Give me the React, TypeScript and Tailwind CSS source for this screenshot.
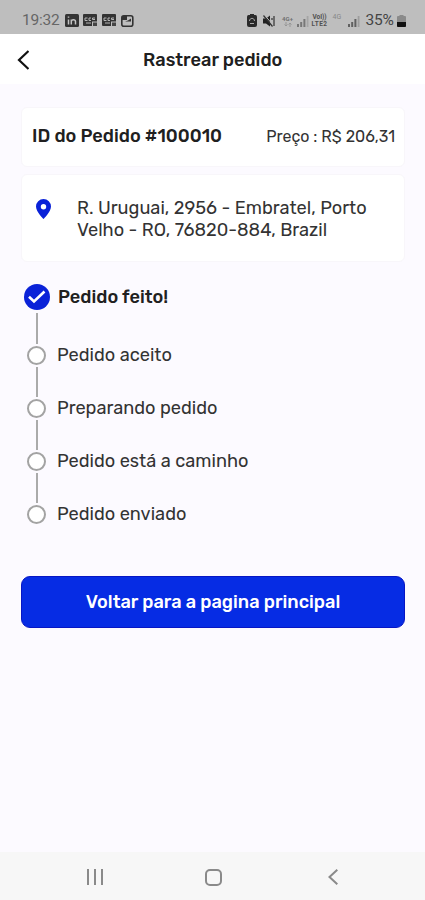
import clsx from "clsx";

type Step = { label: string; done?: boolean };

const steps: Step[] = [
  { label: "Pedido feito!", done: true },
  { label: "Pedido aceito" },
  { label: "Preparando pedido" },
  { label: "Pedido está a caminho" },
  { label: "Pedido enviado" },
];

function Signal({ className }: { className?: string }) {
  return (
    <svg viewBox="0 0 12 12" className={clsx("h-3 w-3 shrink-0", className)} fill="currentColor">
      <path d="M0 9h2v3H0zM3.2 7h2v5h-2zM6.4 4h2v8h-2z" />
      <path d="M9.7 1h1.8v11H9.7z" opacity=".35" />
    </svg>
  );
}

function CardIcon() {
  return (
    <svg viewBox="0 0 15 13" className="h-[13px] w-[15px]">
      <rect width="14" height="12" rx="1" fill="#333" />
      <path d="M4.500 4H2v2.500h2.500M8 4H6v2.500h2M12 4h-2.500v1.500H12M3 9h5" stroke="#b5b5b5" strokeWidth="1" fill="none" />
      <path d="M9 7.500h6V13H9z" fill="#bebebe" />
      <path d="M10 8.500h4V12h-4z" fill="#444" />
    </svg>
  );
}

function StatusBar() {
  return (
    <div className="flex h-[34px] shrink-0 items-center bg-[#bebebe] pt-[7px] pl-[22px] font-[Roboto,sans-serif] text-[#4a4a4a]">
      <span className="w-[43px] text-[15.500px] leading-none tracking-[-0.2px] text-[#666]">19:32</span>
      <svg viewBox="0 0 14 13" className="mr-1 h-[13px] w-[14px]">
        <rect width="14" height="13" rx="1.5" fill="#333" />
        <path d="M3.5 5.5v5M3.5 2.5v1.3M6.3 10.5v-5M6.3 7.5c0-2.4 4.2-2.4 4.2 0v3" stroke="#c4c4c4" strokeWidth="1.5" fill="none" />
      </svg>
      <div className="flex gap-[3.5px]">
        <CardIcon />
        <CardIcon />
      </div>
      <svg viewBox="0 0 13 12" className="ml-1 h-3 w-[13px]">
        <rect x=".8" y=".8" width="11" height="10.4" rx="2" fill="#bebebe" stroke="#333" strokeWidth="1.6" />
        <path d="M1 1h5v4H1zM7 5.500l3-2v3H4z" fill="#333" />
      </svg>

      <svg viewBox="0 0 10 13" className="ml-[113px] h-[13px] w-[10px]">
        <path d="M3 0h4v1h1.500Q10 1 10 3v8q0 2-2 2H2q-2 0-2-2V3q0-2 1.500-2H3z" fill="#2a2a2a" />
        <path d="M2.500 7c0-3.500 5-3.500 5 0M3 9.500h4" stroke="#aaa" fill="none" />
      </svg>
      <svg viewBox="0 0 12 12" className="ml-[6px] h-3 w-3">
        <path d="M0 3.500h3L7 .5v11L3 8.500H0z" fill="#222" />
        <path d="M1.500 0l9 10.500" stroke="#bebebe" strokeWidth="1" />
        <path d="M.5 .5l9 11M9 3v2M11 1v10" stroke="#333" strokeWidth="1.200" />
      </svg>
      <span className="ml-[6px] flex w-[14px] flex-col items-center text-[6px] leading-[7px] font-bold text-[#707070]">
        4G+
        <svg viewBox="0 0 8 5" className="h-[5px] w-2 opacity-50" fill="none" stroke="currentColor">
          <path d="M2 0v4M.5 2.500L2 4l1.500-1.500M6 5V1M4.500 2.500L6 1l1.500 1.500" />
        </svg>
      </span>
      <Signal className="ml-[2px] text-[#777]" />
      <span className="ml-[2px] flex w-[18px] flex-col items-center text-[6.500px] leading-[7px] font-bold text-[#505050]">
        <span>VoI))</span>
        <span className="tracking-[0.4px]">LTE2</span>
      </span>
      <span className="mb-[6px] ml-[4px] w-[11px] text-[7px] leading-none text-[#888]">4G</span>
      <Signal className="ml-[4px] text-[#606060]" />
      <span className="ml-[6px] w-[29px] text-[15.500px] leading-none tracking-[-0.2px] text-[#444]">35%</span>
      <svg viewBox="0 0 9 12" className="ml-[2px] h-3 w-[9px]">
        <path d="M2.500 0h4v1H8q1 0 1 1v9q0 1-1 1H1q-1 0-1-1V2q0-1 1-1h1.500z" fill="#8a8a8a" />
        <path d="M0 7h9v4q0 1-1 1H1q-1 0-1-1z" fill="#111" />
      </svg>
    </div>
  );
}

function StepRow({ step, last }: { step: Step; last: boolean }) {
  return (
    <li className="flex">
      <div className="flex w-[31px] shrink-0 flex-col items-center">
        {step.done ? (
          <svg viewBox="0 0 26 26" className="h-[26px] w-[26px]">
            <circle cx="13" cy="13" r="13" fill="#0a22d8" />
            <path d="M5 12.800l5 4.700 10.500-10" fill="none" stroke="#fff" strokeWidth="2.600" />
          </svg>
        ) : (
          <div className="h-[19px] w-[19px] rounded-full border-2 border-[#a3a3a3] bg-white" />
        )}
        {!last && (
          <div className={clsx("w-[2px] bg-[#aaaaaa]", step.done ? "mt-[3px] mb-[2px] h-[31px]" : "my-[2px] h-[30px]")} />
        )}
      </div>
      <span
        className={clsx(
          "whitespace-nowrap text-[18.200px]",
          step.done ? "ml-[6px] h-[26px] leading-[26px] font-medium text-[#202020]" : "ml-[5px] h-[19px] leading-[18px] text-[#333]"
        )}
      >
        {step.label}
      </span>
    </li>
  );
}

export default function App() {
  return (
    <div className="flex h-[900px] w-[425px] flex-col overflow-hidden bg-[#fcfaff] font-[Rubik,Roboto,sans-serif]">
      <StatusBar />

      <header className="flex h-[50px] shrink-0 items-center bg-white">
        <svg viewBox="0 0 12 20" className="mt-[2px] ml-[17px] h-5 w-3">
          <path d="M11.500 1L2 10l9.500 9" fill="none" stroke="#111" strokeWidth="2.200" />
        </svg>
        <h1 className="mt-[4px] ml-[114px] text-[18.200px] font-medium whitespace-nowrap text-[#202020]">Rastrear pedido</h1>
      </header>

      <main className="flex flex-1 flex-col pt-[23px] pr-[20px] pl-[21px]">
        <section className="flex h-[60px] items-center rounded-md border border-[#f8f6fa] bg-white pr-[9px] pl-[10px]">
          <span className="text-[18.200px] font-medium whitespace-nowrap text-[#202020]">ID do Pedido #100010</span>
          <span className="ml-auto text-[16px] whitespace-nowrap text-[#333]">Preço : R$ 206,31</span>
        </section>

        <section className="mt-[7px] flex h-[88px] rounded-md border border-[#f8f6fa] bg-white pt-[22px] pl-[14px]">
          <svg viewBox="0 0 15 20" className="mt-[2px] h-5 w-[15px]">
            <path fillRule="evenodd" d="M7.500 0a7.500 7.500 0 0 0-7.500 7.500C0 13 7.500 20 7.500 20s7.500-7 7.500-12.500A7.500 7.500 0 0 0 7.500 0zm0 5a2.700 2.700 0 1 1 0 5.400A2.700 2.700 0 0 1 7.500 5z" fill="#0a22d8" />
          </svg>
          <p className="ml-[26px] text-[18.200px] leading-[22px] whitespace-nowrap text-[#333]">
            R. Uruguai, 2956 - Embratel, Porto
            <br />
            Velho - RO, 76820-884, Brazil
          </p>
        </section>

        <ul className="mt-[22px]">
          {steps.map((s, i) => (
            <StepRow key={s.label} step={s} last={i === steps.length - 1} />
          ))}
        </ul>

        <button className="mt-[52px] h-[52px] w-[384px] rounded-[9px] border border-[#0716c4] bg-[#062ce4] pt-px text-[18.200px] font-medium text-white">
          Voltar para a pagina principal
        </button>
      </main>

      <nav className="flex h-12 shrink-0 items-center bg-[#f7f7f7] pt-[2px] text-[#8a8a8a]">
        <svg viewBox="0 0 16 16" className="ml-[87px] h-4 w-4" stroke="currentColor" strokeWidth="2">
          <path d="M1 0v16M8 0v16M15 0v16" />
        </svg>
        <div className="ml-[102px] h-[17px] w-[17px] rounded-[5px] border-2 border-[#8a8a8a]" />
        <svg viewBox="0 0 10 16" className="ml-[106px] h-4 w-[10px]" fill="none" stroke="currentColor" strokeWidth="2">
          <path d="M9.300 .8L1.500 8l7.800 7.200" />
        </svg>
      </nav>
    </div>
  );
}
